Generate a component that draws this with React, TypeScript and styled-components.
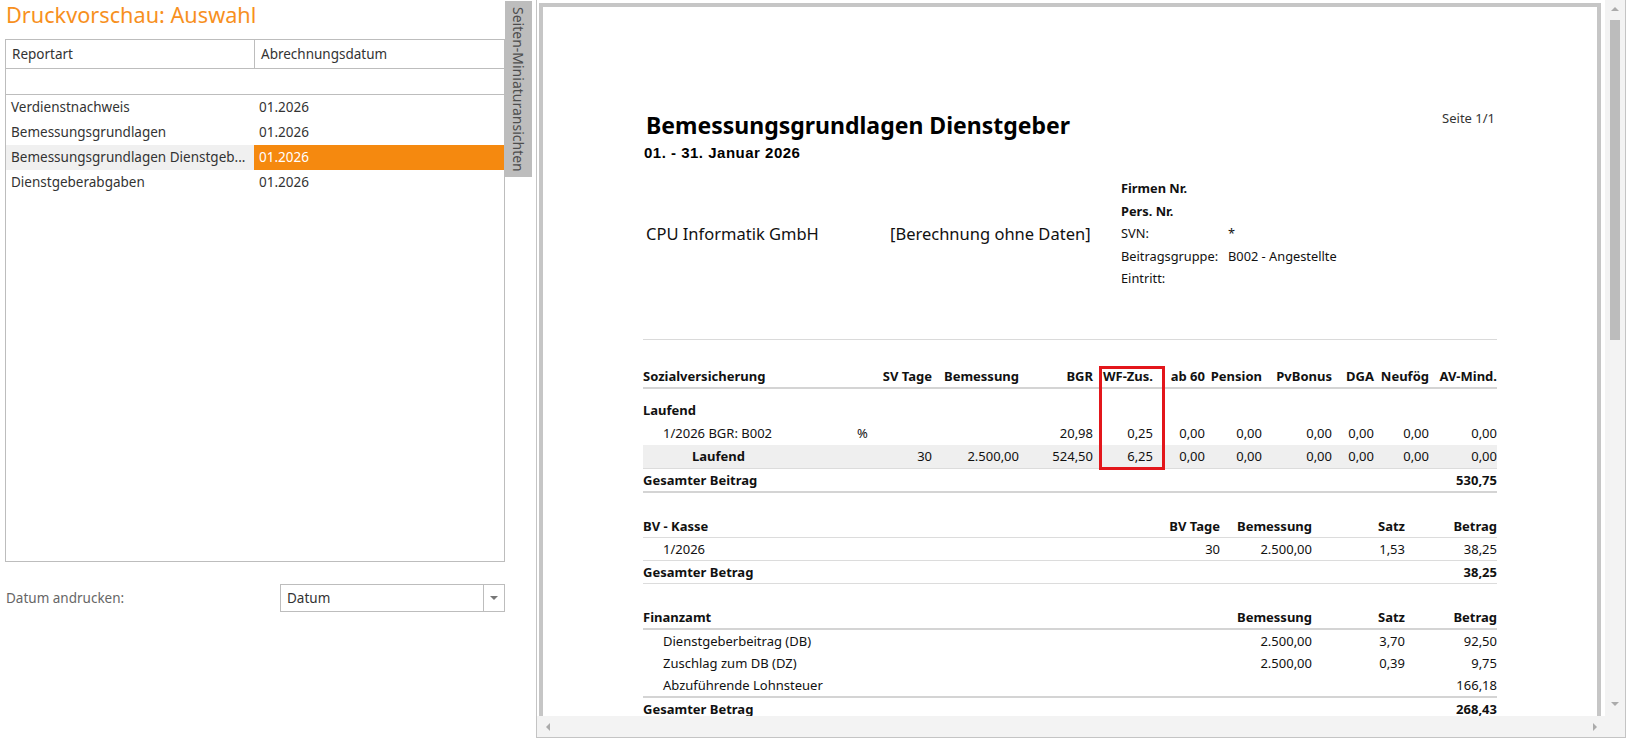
import React from "react";
import styled, { createGlobalStyle } from "styled-components";

const GlobalStyle = createGlobalStyle`
  html, body {
    margin: 0;
    padding: 0;
    background: #fff;
    overflow: hidden;
  }
  body {
    font-family: "Noto Sans", "Open Sans", sans-serif;
    color: #333;
  }
`;

type Report = { name: string; date: string; selected?: boolean };

const reports: Report[] = [
  { name: "Verdienstnachweis", date: "01.2026" },
  { name: "Bemessungsgrundlagen", date: "01.2026" },
  { name: "Bemessungsgrundlagen Dienstgeb...", date: "01.2026", selected: true },
  { name: "Dienstgeberabgaben", date: "01.2026" },
];

type Col = { label: string; w: string; align?: "left" | "right"; pad?: number };

const svCols: Col[] = [
  { label: "Sozialversicherung", w: "214px", align: "left" },
  { label: "", w: "15px", align: "left" },
  { label: "SV Tage", w: "60px" },
  { label: "Bemessung", w: "87px" },
  { label: "BGR", w: "74px" },
  { label: "WF-Zus.", w: "65px", pad: 5 },
  { label: "ab 60", w: "47px" },
  { label: "Pension", w: "57px" },
  { label: "PvBonus", w: "74px", pad: 4 },
  { label: "DGA", w: "38px" },
  { label: "Neufög", w: "55px" },
  { label: "AV-Mind.", w: "68px" },
];

const bvCols: Col[] = [
  { label: "BV - Kasse", w: "1fr", align: "left" },
  { label: "BV Tage", w: "80px" },
  { label: "Bemessung", w: "92px" },
  { label: "Satz", w: "93px" },
  { label: "Betrag", w: "92px" },
];

const faCols: Col[] = [
  { label: "Finanzamt", w: "1fr", align: "left" },
  { label: "Bemessung", w: "92px" },
  { label: "Satz", w: "93px" },
  { label: "Betrag", w: "92px" },
];

const zero = ["0,00", "0,00", "0,00", "0,00", "0,00", "0,00"];

const App = () => {
  const svTemplate = svCols.map((c) => c.w).join(" ");
  const bvTemplate = bvCols.map((c) => c.w).join(" ");
  const faTemplate = faCols.map((c) => c.w).join(" ");

  // first cell may be bold on its own (group sums), the rest follow `bold`
  const cellsFor = (cols: Col[], values: string[], bold = false, indent = 0, boldLabel = bold) =>
    values.map((v, i) => (
      <Cell
        key={i}
        $align={cols[i].align ?? "right"}
        $pad={cols[i].pad ?? 0}
        $bold={i === 0 ? boldLabel : bold}
        $indent={i === 0 ? indent : 0}
      >
        {v}
      </Cell>
    ));

  return (
    <>
      <GlobalStyle />
      <Screen>
        <LeftPanel>
          <PanelTitle>Druckvorschau: Auswahl</PanelTitle>
          <GridBox>
            <GridHeader>
              <HeaderCell $first>Reportart</HeaderCell>
              <HeaderCell>Abrechnungsdatum</HeaderCell>
            </GridHeader>
            <FilterRow />
            {reports.map((r) => (
              <GridRow key={r.name}>
                <NameCell $selected={r.selected}>{r.name}</NameCell>
                <DateCell $selected={r.selected}>{r.date}</DateCell>
              </GridRow>
            ))}
          </GridBox>
          <OptionRow>
            <OptionLabel>Datum andrucken:</OptionLabel>
            <Combo>
              <ComboText>Datum</ComboText>
              <ComboButton>
                <Caret $dir="down" $color="#777" />
              </ComboButton>
            </Combo>
          </OptionRow>
        </LeftPanel>

        <SideTab>
          <SideTabText>Seiten-Miniaturansichten</SideTabText>
        </SideTab>

        <Preview>
          <Viewport>
            <Page>
              <PageHead>
                <div>
                  <ReportTitle>Bemessungsgrundlagen Dienstgeber</ReportTitle>
                  <ReportPeriod>01. - 31. Januar 2026</ReportPeriod>
                </div>
                <PageNo>Seite 1/1</PageNo>
              </PageHead>

              <InfoRow>
                <Company>CPU Informatik GmbH</Company>
                <NoData>[Berechnung ohne Daten]</NoData>
                <Fields>
                  <FieldLabel $bold>Firmen Nr.</FieldLabel>
                  <FieldValue />
                  <FieldLabel $bold>Pers. Nr.</FieldLabel>
                  <FieldValue />
                  <FieldLabel>SVN:</FieldLabel>
                  <FieldValue>*</FieldValue>
                  <FieldLabel>Beitragsgruppe:</FieldLabel>
                  <FieldValue>B002 - Angestellte</FieldValue>
                  <FieldLabel>Eintritt:</FieldLabel>
                  <FieldValue />
                </Fields>
              </InfoRow>

              <Separator />

              <Section $top={26}>
                <Row $cols={svTemplate} $h={21} $line="thick">
                  {cellsFor(svCols, svCols.map((c) => c.label), true)}
                </Row>
                <Row $cols={svTemplate} $h={23} $gap={10}>
                  <Cell $align="left" $bold>Laufend</Cell>
                </Row>
                <Row $cols={svTemplate} $h={23}>
                  {cellsFor(svCols, ["1/2026 BGR: B002", "%", "", "", "20,98", "0,25", ...zero], false, 20)}
                </Row>
                <Row $cols={svTemplate} $h={23} $line="thin" $shade>
                  {cellsFor(svCols, ["Laufend", "", "30", "2.500,00", "524,50", "6,25", ...zero], false, 49, true)}
                </Row>
                <Row $cols="1fr auto" $h={22} $line="thick">
                  <Cell $align="left" $bold>Gesamter Beitrag</Cell>
                  <Cell $align="right" $bold>530,75</Cell>
                </Row>
                <Marker />
              </Section>

              <Section $top={22}>
                <Row $cols={bvTemplate} $h={22} $line="thin">
                  {cellsFor(bvCols, bvCols.map((c) => c.label), true)}
                </Row>
                <Row $cols={bvTemplate} $h={22} $line="thin">
                  {cellsFor(bvCols, ["1/2026", "30", "2.500,00", "1,53", "38,25"], false, 20)}
                </Row>
                <Row $cols="1fr auto" $h={22} $line="thin">
                  <Cell $align="left" $bold>Gesamter Betrag</Cell>
                  <Cell $align="right" $bold>38,25</Cell>
                </Row>
              </Section>

              <Section $top={22}>
                <Row $cols={faTemplate} $h={22} $line="thick">
                  {cellsFor(faCols, faCols.map((c) => c.label), true)}
                </Row>
                <Row $cols={faTemplate} $h={22}>
                  {cellsFor(faCols, ["Dienstgeberbeitrag (DB)", "2.500,00", "3,70", "92,50"], false, 20)}
                </Row>
                <Row $cols={faTemplate} $h={22}>
                  {cellsFor(faCols, ["Zuschlag zum DB (DZ)", "2.500,00", "0,39", "9,75"], false, 20)}
                </Row>
                <Row $cols={faTemplate} $h={22} $line="thick">
                  {cellsFor(faCols, ["Abzuführende Lohnsteuer", "", "", "166,18"], false, 20)}
                </Row>
                <Row $cols="1fr auto" $h={22}>
                  <Cell $align="left" $bold>Gesamter Betrag</Cell>
                  <Cell $align="right" $bold>268,43</Cell>
                </Row>
              </Section>
            </Page>
          </Viewport>

          <VScroll>
            <Caret $dir="up" />
            <VThumb />
            <Caret $dir="down" />
          </VScroll>
          <HScroll>
            <Caret $dir="left" />
            <Caret $dir="right" />
          </HScroll>
          <Corner />
        </Preview>
      </Screen>
    </>
  );
};

const Screen = styled.div`
  display: flex;
  width: 1627px;
  height: 738px;
  overflow: hidden;
`;

/* left selection panel */

const LeftPanel = styled.div`
  width: 500px;
  padding-left: 5px;
  flex-shrink: 0;
  display: flex;
  flex-direction: column;
`;

const PanelTitle = styled.div`
  height: 30px;
  margin-bottom: 9px;
  padding-left: 1px;
  font-size: 21.7px;
  line-height: 30px;
  color: #f7901e;
  white-space: nowrap;
`;

const GridBox = styled.div`
  box-sizing: border-box;
  height: 523px;
  border: 1px solid #bdbdbd;
  font-size: 13.5px;
  color: #333;
`;

const GridHeader = styled.div`
  display: grid;
  grid-template-columns: 249px 1fr;
  height: 28px;
  border-bottom: 1px solid #bdbdbd;
`;

const HeaderCell = styled.div<{ $first?: boolean }>`
  box-sizing: border-box;
  padding-left: 6px;
  line-height: 28px;
  border-right: ${(p) => (p.$first ? "1px solid #bdbdbd" : "none")};
`;

const FilterRow = styled.div`
  height: 25px;
  border-bottom: 1px solid #bdbdbd;
`;

const GridRow = styled.div`
  display: grid;
  grid-template-columns: 248px 1fr;
  height: 25px;
  line-height: 25px;
`;

const NameCell = styled.div<{ $selected?: boolean }>`
  padding-left: 5px;
  white-space: nowrap;
  overflow: hidden;
  background: ${(p) => (p.$selected ? "#f0f0f0" : "transparent")};
`;

const DateCell = styled.div<{ $selected?: boolean }>`
  padding-left: 5px;
  background: ${(p) => (p.$selected ? "#f5890f" : "transparent")};
  color: ${(p) => (p.$selected ? "#fff" : "#333")};
`;

const OptionRow = styled.div`
  display: flex;
  align-items: center;
  justify-content: space-between;
  margin-top: 22px;
`;

const OptionLabel = styled.span`
  padding-left: 1px;
  font-size: 13.5px;
  color: #666;
`;

const Combo = styled.div`
  box-sizing: border-box;
  display: flex;
  width: 225px;
  height: 28px;
  border: 1px solid #bdbdbd;
  font-size: 13.5px;
`;

const ComboText = styled.span`
  flex: 1;
  padding-left: 6px;
  line-height: 26px;
  color: #333;
`;

const ComboButton = styled.span`
  width: 20px;
  border-left: 1px solid #bdbdbd;
  display: flex;
  align-items: center;
  justify-content: center;
`;

/* vertical thumbnail tab */

const SideTab = styled.div`
  flex-shrink: 0;
  width: 27px;
  height: 176px;
  margin-top: 1px;
  background: #bdbdbd;
  display: flex;
  justify-content: center;
`;

const SideTabText = styled.span`
  writing-mode: vertical-rl;
  padding-top: 6px;
  font-size: 14px;
  color: #4d4d4d;
  white-space: nowrap;
`;

/* preview */

const Preview = styled.div`
  box-sizing: border-box;
  flex: 1;
  margin-left: 4px;
  margin-right: 1px;
  height: 738px;
  border: 1px solid #c4c4c4;
  border-top: none;
  display: grid;
  grid-template-columns: 1fr 20px;
  grid-template-rows: 1fr 21px;
  overflow: hidden;
`;

const Viewport = styled.div`
  padding: 3px 4px 0 2px;
  overflow: hidden;
`;

const Page = styled.div`
  box-sizing: border-box;
  height: 740px;
  border: 4px solid #c6c6c6;
  border-bottom: none;
  padding: 103px 100px 0;
  background: #fff;
  color: #111;
`;

const PageHead = styled.div`
  display: flex;
  justify-content: space-between;
  align-items: flex-start;
`;

const ReportTitle = styled.div`
  padding-left: 3px;
  font-size: 23px;
  line-height: 30px;
  font-weight: 700;
  color: #000;
`;

const ReportPeriod = styled.div`
  margin-top: 4px;
  padding-left: 1px;
  font-family: "Liberation Sans", Arial, sans-serif;
  font-size: 15px;
  letter-spacing: 0.5px;
  line-height: 18px;
  font-weight: 700;
  color: #000;
`;

const PageNo = styled.div`
  margin-right: 2px;
  font-size: 13px;
  line-height: 16px;
  color: #333;
`;

const InfoRow = styled.div`
  display: flex;
  align-items: center;
  margin-top: 15px;
`;

const Company = styled.div`
  width: 244px;
  padding-left: 3px;
  font-size: 16.5px;
  color: #111;
`;

const NoData = styled.div`
  width: 231px;
  font-size: 16.5px;
  color: #111;
`;

const Fields = styled.div`
  display: grid;
  grid-template-columns: 107px auto;
  font-size: 12.8px;
  line-height: 22.5px;
  color: #111;
`;

const FieldLabel = styled.span<{ $bold?: boolean }>`
  font-weight: ${(p) => (p.$bold ? 700 : 400)};
`;

const FieldValue = styled.span``;

const Separator = styled.div`
  margin-top: 49px;
  height: 1px;
  background: #dadada;
`;

const Section = styled.div<{ $top: number }>`
  position: relative;
  margin-top: ${(p) => p.$top}px;
  font-size: 13px;
`;

const Row = styled.div<{
  $cols: string;
  $h: number;
  $gap?: number;
  $line?: "thin" | "thick";
  $shade?: boolean;
}>`
  display: grid;
  grid-template-columns: ${(p) => p.$cols};
  height: ${(p) => p.$h}px;
  line-height: ${(p) => p.$h}px;
  margin-top: ${(p) => p.$gap ?? 0}px;
  background: ${(p) => (p.$shade ? "#efefef" : "transparent")};
  border-bottom: ${(p) =>
    p.$line === "thick" ? "2px solid #d4d4d4" : p.$line === "thin" ? "1px solid #dcdcdc" : "none"};
`;

const Cell = styled.div<{ $align: "left" | "right"; $bold?: boolean; $pad?: number; $indent?: number }>`
  text-align: ${(p) => p.$align};
  font-weight: ${(p) => (p.$bold ? 700 : 400)};
  padding-right: ${(p) => p.$pad ?? 0}px;
  padding-left: ${(p) => p.$indent ?? 0}px;
  white-space: nowrap;
  color: #111;
`;

/* red highlight drawn over the WF-Zus. column */
const Marker = styled.div`
  position: absolute;
  left: 456px;
  top: 0;
  width: 60px;
  height: 98px;
  border: 3px solid #e3161b;
  pointer-events: none;
`;

const VScroll = styled.div`
  background: #f3f3f3;
  display: flex;
  flex-direction: column;
  align-items: center;
  padding: 7px 0 10px;
  gap: 9px;
  & > span:last-child {
    margin-top: auto;
  }
`;

const VThumb = styled.div`
  width: 10px;
  height: 320px;
  background: #bcbcbc;
`;

const HScroll = styled.div`
  background: #f3f3f3;
  display: flex;
  align-items: center;
  justify-content: space-between;
  padding: 0 8px 0 9px;
`;

const Corner = styled.div`
  background: #f3f3f3;
`;

const Caret = styled.span<{ $dir: "up" | "down" | "left" | "right"; $color?: string }>`
  display: block;
  width: 0;
  height: 0;
  ${({ $dir, $color = "#ababab" }) => {
    switch ($dir) {
      case "up":
        return `border-left: 4px solid transparent; border-right: 4px solid transparent; border-bottom: 4px solid ${$color};`;
      case "down":
        return `border-left: 4px solid transparent; border-right: 4px solid transparent; border-top: 4px solid ${$color};`;
      case "left":
        return `border-top: 4px solid transparent; border-bottom: 4px solid transparent; border-right: 4px solid ${$color};`;
      default:
        return `border-top: 4px solid transparent; border-bottom: 4px solid transparent; border-left: 4px solid ${$color};`;
    }
  }}
`;

export default App;
